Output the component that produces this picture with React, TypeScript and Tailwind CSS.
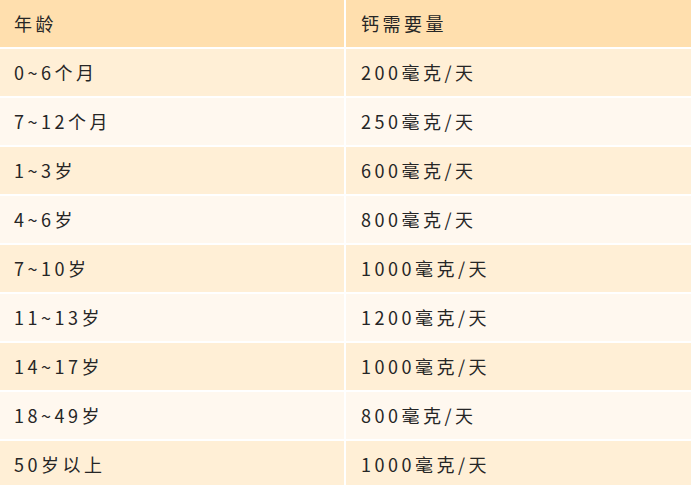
import React from "react";

const rows: [string, string][] = [
  ["0~6个月", "200毫克/天"],
  ["7~12个月", "250毫克/天"],
  ["1~3岁", "600毫克/天"],
  ["4~6岁", "800毫克/天"],
  ["7~10岁", "1000毫克/天"],
  ["11~13岁", "1200毫克/天"],
  ["14~17岁", "1000毫克/天"],
  ["18~49岁", "800毫克/天"],
  ["50岁以上", "1000毫克/天"],
];

export default function App() {
  return (
    <div
      className="w-[692px] h-[485px] overflow-hidden bg-white text-[18px] text-[#262626] tracking-[3.5px]"
      style={{ fontFamily: '"Noto Sans CJK SC", "Noto Sans", sans-serif' }}
    >
      <div className="flex flex-col gap-[2px] w-[691px]">
        <div className="grid grid-cols-[344px_1fr] gap-[2px] h-[47px]">
          <div className="bg-[#ffdfae] flex items-center pl-[14px]">年龄</div>
          <div className="bg-[#ffdfae] flex items-center pl-[15px]">钙需要量</div>
        </div>
        {rows.map(([a, b], i) => (
          <div key={i} className="grid grid-cols-[344px_1fr] gap-[2px] h-[47px]">
            <div
              className={`${i % 2 === 0 ? "bg-[#ffefd6]" : "bg-[#fff8ef]"} flex items-center pl-[14px]`}
            >
              {a}
            </div>
            <div
              className={`${i % 2 === 0 ? "bg-[#ffefd6]" : "bg-[#fff8ef]"} flex items-center pl-[15px]`}
            >
              {b}
            </div>
          </div>
        ))}
      </div>
    </div>
  );
}
